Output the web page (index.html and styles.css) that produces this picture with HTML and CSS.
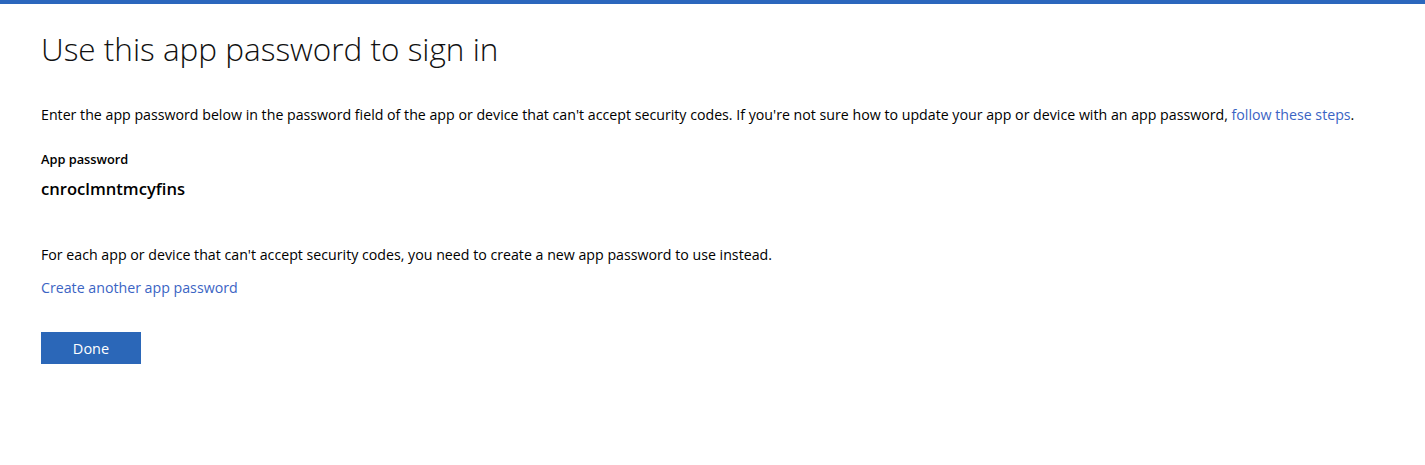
FILE: index.html
```html
<!DOCTYPE html>
<html lang="en">
<head>
    <meta charset="UTF-8">
    <title>App password</title>
    <link rel="stylesheet" href="styles.css">
</head>
<body>
    <div class="topbar"></div>

    <div class="content">
        <h1 class="title">Use this app password to sign in</h1>

        <p class="intro">Enter the app password below in the password field of the app or device that can't accept security codes. If you're not sure how to update your app or device with an app password, <a href="#">follow these steps</a>.</p>

        <div class="label">App password</div>
        <div class="password">cnroclmntmcyfins</div>

        <p class="note">For each app or device that can't accept security codes, you need to create a new app password to use instead.</p>
        <a class="another" href="#">Create another app password</a>

        <div class="actions">
            <button class="done" type="button">Done</button>
        </div>
    </div>
</body>
</html>
```

FILE: styles.css
```css
body {
    margin: 0;
    background: #fff;
    color: #000;
    font-family: "Open Sans", "Noto Sans", sans-serif;
}
.topbar {
    height: 4px;
    background: #2b67bd;
}
.content {
    padding: 0 41px;
}
.title {
    margin: 25px 0 0 0;
    font-size: 31.5px;
    font-weight: 300;
    line-height: 40px;
    color: #111;
}
.intro {
    margin: 36px 0 0 0;
    font-size: 14.2px;
    line-height: 20px;
}
a {
    color: #3b64c4;
    text-decoration: none;
}
.label {
    margin-top: 25px;
    font-size: 12.8px;
    font-weight: 600;
    line-height: 18px;
}
.password {
    margin-top: 10px;
    font-size: 16.6px;
    font-weight: 600;
    line-height: 22px;
}
.note {
    margin: 45px 0 0 0;
    font-size: 14.2px;
    line-height: 20px;
}
.another {
    display: inline-block;
    margin-top: 13px;
    font-size: 14.2px;
    line-height: 20px;
}
.actions {
    margin-top: 34px;
}
.done {
    width: 100px;
    height: 32px;
    border: none;
    background: #2b67b8;
    color: #fff;
    font-family: inherit;
    font-size: 14.5px;
    padding: 0;
}
```
